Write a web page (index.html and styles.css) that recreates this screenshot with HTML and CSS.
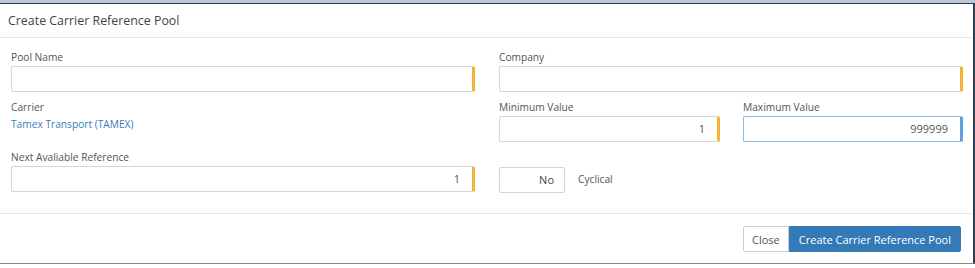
FILE: index.html
```html
<!DOCTYPE html>
<html>

<head>
    <title>Create Carrier Reference Pool</title>
    <link rel="stylesheet" href="styles.css">
</head>

<body>
    <div class="backdrop"></div>
    <div class="modal">
        <div class="modal-header">
            <h4>Create Carrier Reference Pool</h4>
        </div>
        <div class="modal-body">
            <div class="col">
                <div class="group">
                    <label>Pool Name</label>
                    <div class="field required"></div>
                </div>
                <div class="group">
                    <label>Carrier</label>
                    <a class="carrier" href="#">Tamex Transport (TAMEX)</a>
                </div>
                <div class="group">
                    <label>Next Avaliable Reference</label>
                    <div class="field required num">1</div>
                </div>
            </div>
            <div class="col">
                <div class="group">
                    <label>Company</label>
                    <div class="field required"></div>
                </div>
                <div class="pair">
                    <div class="group">
                        <label>Minimum Value</label>
                        <div class="field required num">1</div>
                    </div>
                    <div class="group">
                        <label>Maximum Value</label>
                        <div class="field focused num">999999</div>
                    </div>
                </div>
                <div class="toggle-row">
                    <div class="toggle">No</div>
                    <span class="toggle-label">Cyclical</span>
                </div>
            </div>
        </div>
        <div class="modal-footer">
            <button class="btn btn-default">Close</button>
            <button class="btn btn-primary">Create Carrier Reference Pool</button>
        </div>
    </div>
</body>

</html>
```

FILE: styles.css
```css
body {
    font-family: "Open Sans", Arial, sans-serif;
    font-size: 10.2px;
    color: #555;
    margin: 0;
    background-color: #fff;
}

.backdrop {
    height: 3px;
    background-color: #bcc6d4;
    border-bottom: 1px solid #2d3e50;
}

.modal {
    border-right: 2px solid #2d3e50;
    border-bottom: 1px solid #888;
    height: 260px;
    box-sizing: border-box;
    display: flex;
    flex-direction: column;
}

.modal-header {
    height: 33px;
    border-bottom: 1px solid #e8e8e8;
    padding-left: 8px;
    display: flex;
    align-items: center;
}

h4 {
    margin: 0;
    font-size: 12.4px;
    font-weight: normal;
    color: #444;
}

.modal-body {
    display: grid;
    grid-template-columns: 464px 464px;
    column-gap: 24px;
    padding: 12px 0 13px 11px;
    border-bottom: 1px solid #e8e8e8;
}

.group {
    height: 50px;
}

label {
    display: block;
    height: 16px;
    line-height: 14px;
}

.field {
    height: 24px;
    border: 1px solid #d6d6d6;
    border-radius: 2px;
    line-height: 24px;
    padding: 0 12px;
    font-size: 11px;
    color: #555;
}

.required {
    border-right: 3px solid #f5b335;
}

.focused {
    border-color: #8cbbe6;
    border-right: 3px solid #5aa2e0;
}

.num {
    text-align: right;
}

.carrier {
    display: block;
    color: #3b7cbb;
    text-decoration: none;
    margin-top: 1px;
}

.pair {
    display: grid;
    grid-template-columns: 221px 220px;
    column-gap: 23px;
}

.toggle-row {
    display: flex;
    align-items: center;
    margin-top: 17px;
}

.toggle {
    width: 54px;
    height: 24px;
    border: 1px solid #d6d6d6;
    border-radius: 2px;
    line-height: 24px;
    text-align: right;
    padding-right: 10px;
    font-size: 11px;
    color: #444;
}

.toggle-label {
    margin-left: 13px;
    margin-top: -2px;
}

.modal-footer {
    display: flex;
    justify-content: flex-end;
    padding: 12px 12px 0 0;
}

.btn {
    font-family: "Open Sans", Arial, sans-serif;
    font-size: 11px;
    height: 26px;
    padding: 0 9px;
    border: 1px solid #ccc;
    cursor: pointer;
}

.btn-default {
    padding: 0 8px;
    background-color: #fff;
    color: #555;
    border-radius: 2px 0 0 2px;
}

.btn-primary {
    background-color: #337ab7;
    border-color: #337ab7;
    color: #fff;
    border-radius: 0 2px 2px 0;
}
```
